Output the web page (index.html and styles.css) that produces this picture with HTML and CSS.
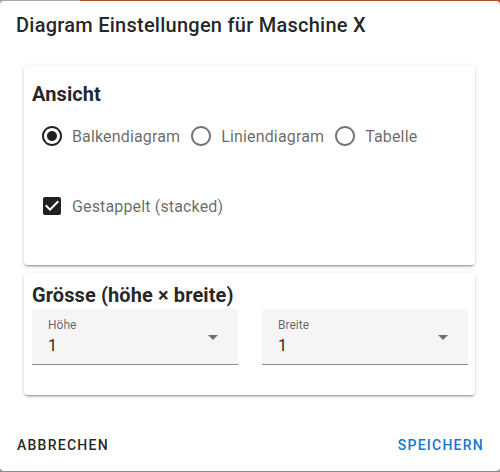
FILE: index.html
```html
<!DOCTYPE html>
<html lang="de">
<head>
    <meta charset="UTF-8">
    <title>Diagram Einstellungen</title>
    <link rel="stylesheet" href="styles.css">
</head>
<body>
    <div class="dialog">
        <div class="dialog-title">Diagram Einstellungen für Maschine X</div>

        <div class="dialog-content">
            <div class="card card-view">
                <div class="card-heading">Ansicht</div>
                <div class="radio-row">
                    <label class="radio checked">
                        <svg class="icon" viewBox="0 0 24 24"><path d="M12 7c-2.76 0-5 2.24-5 5s2.24 5 5 5 5-2.24 5-5-2.24-5-5-5zm0-5C6.48 2 2 6.48 2 12s4.48 10 10 10 10-4.48 10-10S17.52 2 12 2zm0 18c-4.42 0-8-3.58-8-8s3.58-8 8-8 8 3.58 8 8-3.58 8-8 8z"/></svg>
                        <span>Balkendiagram</span>
                    </label>
                    <label class="radio">
                        <svg class="icon" viewBox="0 0 24 24"><path d="M12 2C6.48 2 2 6.48 2 12s4.48 10 10 10 10-4.48 10-10S17.52 2 12 2zm0 18c-4.42 0-8-3.58-8-8s3.58-8 8-8 8 3.58 8 8-3.58 8-8 8z"/></svg>
                        <span>Liniendiagram</span>
                    </label>
                    <label class="radio">
                        <svg class="icon" viewBox="0 0 24 24"><path d="M12 2C6.48 2 2 6.48 2 12s4.48 10 10 10 10-4.48 10-10S17.52 2 12 2zm0 18c-4.42 0-8-3.58-8-8s3.58-8 8-8 8 3.58 8 8-3.58 8-8 8z"/></svg>
                        <span>Tabelle</span>
                    </label>
                </div>
                <label class="checkbox">
                    <svg class="icon" viewBox="0 0 24 24"><path d="M19 3H5c-1.11 0-2 .9-2 2v14c0 1.1.89 2 2 2h14c1.11 0 2-.9 2-2V5c0-1.1-.89-2-2-2zm-9 14l-5-5 1.41-1.41L10 14.17l7.59-7.59L19 8l-9 9z"/></svg>
                    <span>Gestappelt (stacked)</span>
                </label>
            </div>

            <div class="card card-size">
                <div class="card-heading">Grösse (höhe × breite)</div>
                <div class="field-grid">
                    <div class="select">
                        <div class="select-text">
                            <div class="select-label">Höhe</div>
                            <div class="select-value">1</div>
                        </div>
                        <span class="select-arrow"></span>
                    </div>
                    <div class="select">
                        <div class="select-text">
                            <div class="select-label">Breite</div>
                            <div class="select-value">1</div>
                        </div>
                        <span class="select-arrow"></span>
                    </div>
                </div>
            </div>
        </div>

        <div class="dialog-actions">
            <button class="btn btn-cancel">Abbrechen</button>
            <button class="btn btn-save">Speichern</button>
        </div>
    </div>
</body>
</html>
```

FILE: styles.css
```css
*{
    margin: 0;
    padding: 0;
    box-sizing: border-box;
}
body{
    width: 500px;
    height: 472px;
    overflow: hidden;
    font-family: Roboto, "Liberation Sans", sans-serif;
    background: linear-gradient(to right, #a6a6a6 0, #a6a6a6 80px, #ab5631 80px) top left / 100% 4px no-repeat, #8c8c8c;
}
.dialog{
    margin-top: 1px;
    height: 470px;
    background: #fff;
    border-radius: 4px;
    display: flex;
    flex-direction: column;
}
.dialog-title{
    padding: 8px 16px 0;
    line-height: 32px;
    font-size: 20px;
    font-weight: 500;
    letter-spacing: .0125em;
    color: rgba(0,0,0,.87);
}
.dialog-content{
    padding: 25px 25px 0 24px;
    display: flex;
    flex-direction: column;
    gap: 8px;
}
.card{
    background: #fff;
    border-radius: 4px;
    box-shadow: 0 3px 1px -2px rgba(0,0,0,.2), 0 2px 2px 0 rgba(0,0,0,.14), 0 1px 5px 0 rgba(0,0,0,.12);
}
.card-heading{
    font-size: 20px;
    font-weight: 700;
    line-height: 28px;
    letter-spacing: .1px;
    color: rgba(0,0,0,.87);
    padding-left: 8px;
}
.card-view{
    height: 199px;
    padding-top: 14px;
}
.radio-row{
    display: flex;
    gap: 9px;
    margin-top: 16px;
    padding-left: 16px;
}
.radio, .checkbox{
    display: flex;
    align-items: center;
    gap: 8px;
    height: 24px;
    font-size: 16px;
    letter-spacing: .009375em;
    color: rgba(0,0,0,.6);
}
.icon{
    width: 24px;
    height: 24px;
    fill: rgba(0,0,0,.54);
}
.checked .icon, .checkbox .icon{
    fill: rgba(0,0,0,.87);
}
.checkbox{
    margin-top: 46px;
    padding-left: 16px;
}
.card-size{
    height: 122px;
    padding: 8px 7px 0 8px;
}
.card-size .card-heading{
    padding-left: 0;
}
.field-grid{
    display: grid;
    grid-template-columns: 1fr 1fr;
    gap: 24px;
}
.select{
    height: 56px;
    background: #f5f5f5;
    border-radius: 4px 4px 0 0;
    border-bottom: 1px solid rgba(0,0,0,.42);
    padding: 8px 20px 0 16px;
    display: flex;
    justify-content: space-between;
}
.select-label{
    font-size: 12px;
    line-height: 16px;
    color: rgba(0,0,0,.6);
}
.select-value{
    margin-top: 1px;
    font-size: 16px;
    line-height: 24px;
    color: rgba(0,0,0,.87);
}
.select-arrow{
    margin-top: 18px;
    width: 0;
    height: 0;
    border-left: 5px solid transparent;
    border-right: 5px solid transparent;
    border-top: 5px solid rgba(0,0,0,.54);
}
.dialog-actions{
    margin-top: auto;
    padding: 8px 8px 8px 9px;
    display: flex;
    justify-content: space-between;
}
.btn{
    height: 36px;
    padding: 0 8px;
    border: 0;
    background: none;
    font-family: inherit;
    font-size: 14px;
    font-weight: 500;
    letter-spacing: .0892857143em;
    text-transform: uppercase;
    cursor: pointer;
}
.btn-cancel{
    color: rgba(0,0,0,.87);
}
.btn-save{
    color: #1976d2;
}
```
